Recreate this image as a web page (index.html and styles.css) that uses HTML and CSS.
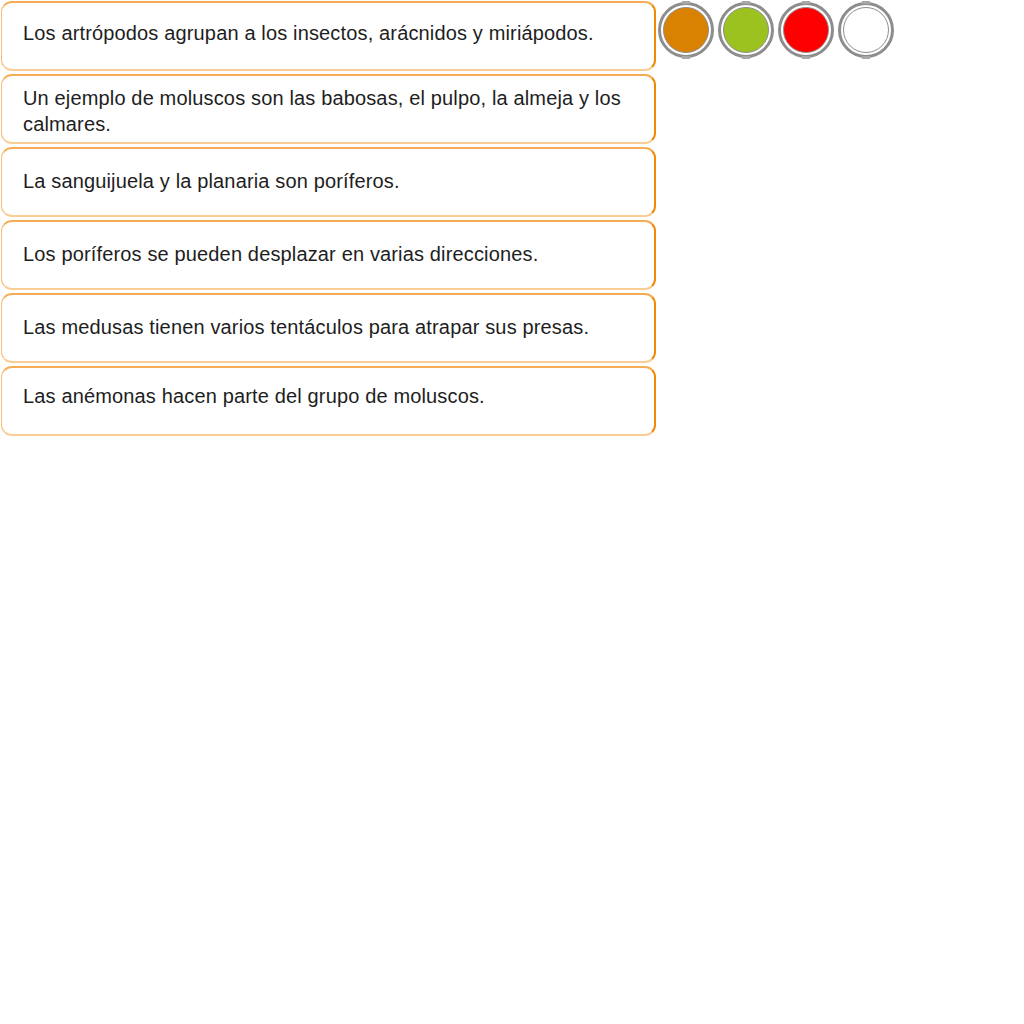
FILE: index.html
```html
<!DOCTYPE html>
<html lang="es">
<head>
<meta charset="utf-8">
<title>Animales invertebrados</title>
<link rel="stylesheet" href="styles.css">
</head>
<body>
<div class="page">
  <div class="list">
    <div class="item item-first"><p>Los artrópodos agrupan a los insectos, arácnidos y miriápodos.</p></div>
    <div class="item item-two"><p>Un ejemplo de moluscos son las babosas, el pulpo, la almeja y los calmares.</p></div>
    <div class="item"><p>La sanguijuela y la planaria son poríferos.</p></div>
    <div class="item"><p>Los poríferos se pueden desplazar en varias direcciones.</p></div>
    <div class="item"><p>Las medusas tienen varios tentáculos para atrapar sus presas.</p></div>
    <div class="item item-high"><p>Las anémonas hacen parte del grupo de moluscos.</p></div>
  </div>
  <div class="lights">
    <div class="light"><div class="dot dot-orange"></div></div>
    <div class="light"><div class="dot dot-green"></div></div>
    <div class="light"><div class="dot dot-red"></div></div>
    <div class="light"><div class="dot dot-white"></div></div>
  </div>
</div>
</body>
</html>
```

FILE: styles.css
```css
html, body {
  margin: 0;
  padding: 0;
  background: #ffffff;
}

body {
  font-family: "Liberation Sans", Arial, sans-serif;
  color: #1e1e1e;
}

.page {
  display: flex;
  align-items: flex-start;
  padding: 1px 0 0 1px;
  gap: 2px;
}

.list {
  display: flex;
  flex-direction: column;
  gap: 3px;
  width: 655px;
}

.item {
  box-sizing: border-box;
  height: 70px;
  display: flex;
  align-items: center;
  padding: 0 20px 3px 21px;
  border-style: solid;
  border-width: 2px 2px 2px 1px;
  border-color: #f5ad55 #ef8a06 #f9cd94 #f7bf75;
  border-radius: 11px;
  background: #ffffff;
}

.item-first {
  padding-bottom: 6px;
}

.item-two {
  padding-bottom: 0;
  padding-top: 3px;
}

.item-high {
  align-items: flex-start;
  padding-top: 15px;
}

.item p {
  margin: 0;
  font-size: 20px;
  line-height: 26px;
  letter-spacing: 0.15px;
}

.lights {
  display: flex;
  gap: 4px;
  padding-top: 1px;
}

.light {
  position: relative;
  box-sizing: border-box;
  width: 56px;
  height: 56px;
  border: 3px solid #8d8d8d;
  border-radius: 50%;
  padding: 2px;
  background: #ffffff;
}

.light::before,
.light::after {
  content: "";
  position: absolute;
  left: 50%;
  width: 8px;
  height: 3px;
  margin-left: -4px;
  background: #a8a8a8;
}

.light::before {
  top: -4px;
}

.light::after {
  bottom: -4px;
}

.dot {
  box-sizing: border-box;
  width: 100%;
  height: 100%;
  border-radius: 50%;
  border: 1px solid #8d8d8d;
}

.dot-orange { background: #d98100; }
.dot-green { background: #9bc21f; }
.dot-red { background: #ff0000; }
.dot-white { background: #ffffff; }
```
